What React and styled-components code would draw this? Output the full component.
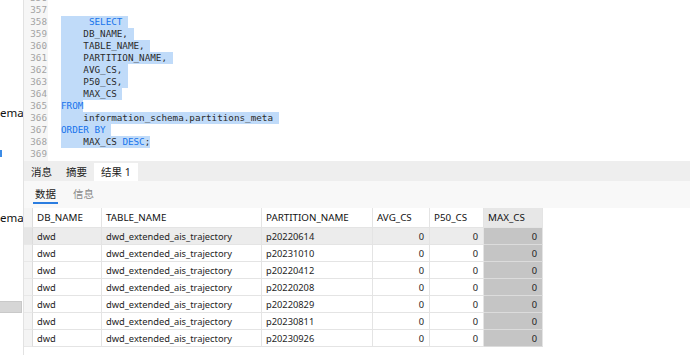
import React from "react";
import styled, { createGlobalStyle } from "styled-components";

const GlobalStyle = createGlobalStyle`
  html, body { margin: 0; padding: 0; background: #fff; }
  body {
    width: 690px; height: 355px; overflow: hidden;
    font-family: "Noto Sans", "Noto Sans CJK SC", sans-serif;
    color: #222;
  }
`;

const Root = styled.div`
  display: flex;
  width: 690px;
  height: 355px;
  overflow: hidden;
`;

const LeftPanel = styled.div`
  width: 23px;
  flex: none;
  border-right: 1px solid #e2e2e2;
  display: flex;
  flex-direction: column;
  overflow: hidden;
`;

const TreeLabel = styled.div`
  margin-top: ${(p) => p.$top}px;
  height: 14px;
  line-height: 14px;
  font-size: 11.5px;
  color: #111;
  white-space: nowrap;
`;

const TreeMark = styled.div`
  margin-top: ${(p) => p.$top}px;
  width: 2px;
  height: 7px;
  background: #3c8ce6;
`;

const ScrollThumb = styled.div`
  margin-top: ${(p) => p.$top}px;
  width: 22px;
  height: 12px;
  box-sizing: border-box;
  background: #d6d6d6;
  border: 1px solid #c9c9c9;
  border-left: none;
`;

const Main = styled.div`
  flex: 1;
  display: flex;
  flex-direction: column;
  min-width: 0;
`;

const Editor = styled.div`
  height: 161px;
  flex: none;
  display: flex;
  overflow: hidden;
  font-family: "DejaVu Sans Mono", monospace;
  font-size: 9.27px;
`;

const Gutter = styled.div`
  width: 24px;
  background: #f6f6f6;
  color: #a3a3a3;
  text-align: right;
  box-sizing: border-box;
  padding-right: 1px;
`;

const Code = styled.div`
  flex: 1;
  padding-left: 13px;
  color: #2b2b2b;
`;

const Lines = styled.div`
  margin-top: -8px;
`;

const Line = styled.div`
  height: 12px;
  line-height: 12px;
  white-space: pre;
`;

const Sel = styled.span`
  display: inline-block;
  height: 12px;
  background: #c0dbf9;
`;

const Kw = styled.span`
  color: #1673ec;
`;

const TabBar = styled.div`
  height: 20px;
  flex: none;
  background: #eeeeee;
  display: flex;
  align-items: flex-end;
  font-size: 10.5px;
`;

const Tab = styled.div`
  height: 18px;
  line-height: 18px;
  padding: 0 7px;
  color: #222;
  background: ${(p) => (p.$active ? "#ffffff" : "transparent")};
`;

const SubTabBar = styled.div`
  height: 27px;
  flex: none;
  background: #f8f8f8;
  display: flex;
  align-items: flex-start;
  gap: 13px;
  padding: 6px 0 0 9px;
  box-sizing: border-box;
  font-size: 10.5px;
`;

const SubTab = styled.div`
  line-height: 14px;
  padding: 0 2px 1px;
  color: ${(p) => (p.$active ? "#222" : "#8a8a8a")};
  border-bottom: 2px solid ${(p) => (p.$active ? "#2b7de0" : "transparent")};
`;

const Table = styled.div`
  flex: 1;
  background: #fff;
  font-size: 9.3px;
`;

const Row = styled.div`
  display: grid;
  grid-template-columns: 9px 69px 160px 111px 57px 54px 59px;
  height: ${(p) => (p.$header ? 20 : 17)}px;
  width: max-content;
  font-size: ${(p) => (p.$header ? "9.8px" : "9.3px")};
`;

const Cell = styled.div`
  box-sizing: border-box;
  border-right: 1px solid #e4e4e4;
  border-bottom: 1px solid ${(p) => (p.$maxcol && !p.$header ? "#dcdcdc" : "#e4e4e4")};
  padding: 0 5px 0 4px;
  display: flex;
  align-items: center;
  justify-content: ${(p) => (p.$num ? "flex-end" : "flex-start")};
  white-space: nowrap;
  overflow: hidden;
  color: ${(p) => (p.$header ? "#111" : "#1e1e1e")};
  background: ${(p) =>
    p.$maxcol
      ? p.$header
        ? "#e7e7e7"
        : "#c5c5c5"
      : p.$sel
      ? "#ececec"
      : "#ffffff"};
`;

const Indicator = styled.div`
  box-sizing: border-box;
  border-right: 1px solid #dcdcdc;
  border-bottom: 1px solid #e8e8e8;
  background: ${(p) => (p.$sel ? "#e6e6e6" : "#f4f4f4")};
`;

const codeLines = [
  { n: 356 },
  { n: 357 },
  { n: 358, parts: [["", "     "], ["kw", "SELECT"], ["", " "]] },
  { n: 359, parts: [["", "    DB_NAME, "]] },
  { n: 360, parts: [["", "    TABLE_NAME, "]] },
  { n: 361, parts: [["", "    PARTITION_NAME, "]] },
  { n: 362, parts: [["", "    AVG_CS, "]] },
  { n: 363, parts: [["", "    P50_CS, "]] },
  { n: 364, parts: [["", "    MAX_CS "]] },
  { n: 365, parts: [["kw", "FROM"]] },
  { n: 366, parts: [["", "    information_schema.partitions_meta "]] },
  { n: 367, parts: [["kw", "ORDER BY"], ["", " "]] },
  { n: 368, parts: [["", "    MAX_CS "], ["kw", "DESC"], ["", ";"]] },
  { n: 369 },
];

const columns = ["DB_NAME", "TABLE_NAME", "PARTITION_NAME", "AVG_CS", "P50_CS", "MAX_CS"];
const partitions = [
  "p20220614",
  "p20231010",
  "p20220412",
  "p20220208",
  "p20220829",
  "p20230811",
  "p20230926",
];

export default function App() {
  return (
    <>
      <GlobalStyle />
      <Root>
        <LeftPanel>
          <TreeLabel $top={106}>ema</TreeLabel>
          <TreeMark $top={30} />
          <TreeLabel $top={54}>ema</TreeLabel>
          <ScrollThumb $top={76} />
        </LeftPanel>
        <Main>
          <Editor>
            <Gutter>
              <Lines>
                {codeLines.map((l) => (
                  <Line key={l.n}>{l.n}</Line>
                ))}
              </Lines>
            </Gutter>
            <Code>
              <Lines>
                {codeLines.map((l) => (
                  <Line key={l.n}>
                    {l.parts ? (
                      <Sel>
                        {l.parts.map(([t, s], i) =>
                          t === "kw" ? <Kw key={i}>{s}</Kw> : <React.Fragment key={i}>{s}</React.Fragment>
                        )}
                      </Sel>
                    ) : null}
                  </Line>
                ))}
              </Lines>
            </Code>
          </Editor>
          <TabBar>
            <Tab>消息</Tab>
            <Tab>摘要</Tab>
            <Tab $active>结果 1</Tab>
          </TabBar>
          <SubTabBar>
            <SubTab $active>数据</SubTab>
            <SubTab>信息</SubTab>
          </SubTabBar>
          <Table>
            <Row $header>
              <Indicator />
              {columns.map((c, i) => (
                <Cell key={c} $header $maxcol={i === 5}>
                  {c}
                </Cell>
              ))}
            </Row>
            {partitions.map((p, r) => (
              <Row key={p}>
                <Indicator $sel={r === 0} />
                <Cell $sel={r === 0}>dwd</Cell>
                <Cell $sel={r === 0}>dwd_extended_ais_trajectory</Cell>
                <Cell $sel={r === 0}>{p}</Cell>
                <Cell $sel={r === 0} $num>0</Cell>
                <Cell $sel={r === 0} $num>0</Cell>
                <Cell $sel={r === 0} $num $maxcol>0</Cell>
              </Row>
            ))}
          </Table>
        </Main>
      </Root>
    </>
  );
}
